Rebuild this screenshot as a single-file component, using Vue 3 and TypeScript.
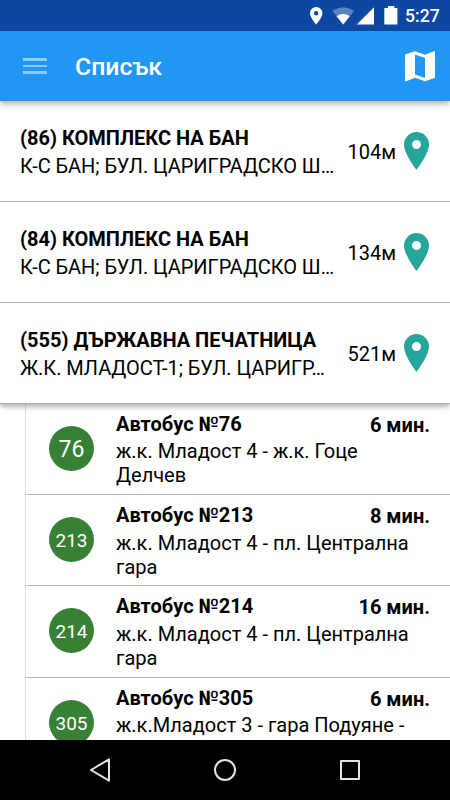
<script setup lang="ts">
interface Stop {
  name: string
  address: string
  distance: string
}

interface Trip {
  line: string
  route: string[]
  eta: string
}

const stops: Stop[] = [
  { name: '(86) КОМПЛЕКС НА БАН', address: 'К-С БАН; БУЛ. ЦАРИГРАДСКО Ш…', distance: '104м' },
  { name: '(84) КОМПЛЕКС НА БАН', address: 'К-С БАН; БУЛ. ЦАРИГРАДСКО Ш…', distance: '134м' },
  { name: '(555) ДЪРЖАВНА ПЕЧАТНИЦА', address: 'Ж.К. МЛАДОСТ-1; БУЛ. ЦАРИГР…', distance: '521м' },
]

const trips: Trip[] = [
  { line: '76', route: ['ж.к. Младост 4 - ж.к. Гоце', 'Делчев'], eta: '6 мин.' },
  { line: '213', route: ['ж.к. Младост 4 - пл. Централна', 'гара'], eta: '8 мин.' },
  { line: '214', route: ['ж.к. Младост 4 - пл. Централна', 'гара'], eta: '16 мин.' },
  { line: '305', route: ['ж.к.Младост 3 - гара Подуяне -'], eta: '6 мин.' },
]
</script>

<template>
  <div class="screen">
    <div class="status">
      <svg class="status-icons" width="108" height="31" viewBox="0 0 108 31">
        <path
          fill="#fff"
          fill-rule="evenodd"
          d="M16.2 7a6.2 6.2 0 0 0-6.2 6.2c0 4.4 6.2 11.2 6.2 11.2s6.2-6.8 6.2-11.2A6.2 6.2 0 0 0 16.2 7zm0 4a2.2 2.2 0 1 1 0 4.4 2.2 2.2 0 0 1 0-4.4z"
        />
        <path fill="#5c83bf" d="M43.2 24.6L32.2 10.8Q43.2 3.6 54.2 10.8z" />
        <path fill="#fff" d="M43.2 24.6L36.6 16.2Q43.2 11.8 49.8 16.2z" />
        <path fill="#fff" d="M56.7 24.6L74 7.2v17.4z" />
        <path
          fill="#fff"
          d="M85.3 8h2.6V6.1h6.4V8h2.5q.6 0 .6.6v15.3q0 .7-.7.7H85q-.7 0-.7-.7V8.7q0-.7.7-.7z"
        />
      </svg>
      <span class="clock">5:27</span>
    </div>

    <header class="toolbar">
      <div class="menu"><i></i><i></i><i></i></div>
      <h1>Списък</h1>
      <svg class="map" width="30" height="31" viewBox="0 0 30 31">
        <path
          fill="#fff"
          fill-rule="evenodd"
          d="M29.2.1l-.3.1L20 3.7 10 .2.6 3.3Q0 3.5 0 4.2v25.3q0 .8.8.8l.3-.1 8.9-3.4 10 3.5 9.4-3.2q.6-.2.6-.9V.9q0-.8-.8-.8zM20 26.9l-10-3.5V3.6l10 3.5z"
        />
      </svg>
    </header>

    <section class="stops">
      <div v-for="stop in stops" :key="stop.name" class="stop">
        <div class="stop-text">
          <div class="name">{{ stop.name }}</div>
          <div class="address">{{ stop.address }}</div>
        </div>
        <span class="distance">{{ stop.distance }}</span>
        <svg class="pin" width="25" height="38" viewBox="0 0 25 38">
          <path
            fill="#26a69a"
            fill-rule="evenodd"
            d="M12.5 0A12.5 12.5 0 0 0 0 12.6C0 22 12.5 38 12.5 38S25 22 25 12.6A12.5 12.5 0 0 0 12.5 0zm0 8a4.5 4.5 0 1 1 0 9 4.5 4.5 0 0 1 0-9z"
          />
        </svg>
      </div>
    </section>

    <section class="trips">
      <div v-for="trip in trips" :key="trip.line" class="trip">
        <div class="badge" :class="{ big: trip.line.length < 3 }">{{ trip.line }}</div>
        <div class="trip-text">
          <div class="trip-head">
            <span>Автобус №{{ trip.line }}</span>
            <span class="eta">{{ trip.eta }}</span>
          </div>
          <div class="route">
            <div v-for="part in trip.route" :key="part">{{ part }}</div>
          </div>
        </div>
      </div>
    </section>

    <nav class="navbar">
      <svg width="450" height="60" viewBox="0 0 450 60" fill="none" stroke="#e4e4e4" stroke-width="2">
        <path stroke-linejoin="round" d="M91 30L109 19.3v21.4z" />
        <circle cx="225" cy="30" r="10" />
        <rect x="341" y="21" width="18" height="18" stroke-linejoin="round" />
      </svg>
    </nav>
  </div>
</template>

<style>
body {
  margin: 0;
}
</style>

<style scoped>
.screen {
  display: flex;
  flex-direction: column;
  width: 450px;
  height: 800px;
  overflow: hidden;
  background: #fff;
  color: #000;
  font-family: Roboto, 'Noto Sans', sans-serif;
  font-size: 20px;
  white-space: nowrap;
}

.status {
  flex: none;
  display: flex;
  justify-content: flex-end;
  align-items: center;
  height: 31px;
  padding-right: 10px;
  background: #0d47a1;
}

.status-icons {
  flex: none;
}

.clock {
  width: 35px;
  margin-left: -3px;
  padding-top: 2px;
  color: #fff;
  font-size: 17.6px;
  font-weight: 500;
  line-height: 29px;
}

.toolbar {
  position: relative;
  z-index: 2;
  flex: none;
  box-sizing: border-box;
  display: flex;
  align-items: center;
  height: 70px;
  padding: 0 15px 0 23px;
  background: #2196f3;
  box-shadow: 0 3px 6px rgba(0, 0, 0, 0.3);
}

.menu {
  display: flex;
  flex-direction: column;
  gap: 4px;
  width: 24px;
}

.menu i {
  height: 2.5px;
  background: #90caf9;
}

h1 {
  flex: 1;
  margin: 0 0 0 28px;
  padding-top: 2px;
  color: #fff;
  font-size: 24.8px;
  font-weight: 500;
  line-height: 30px;
}

.stops {
  position: relative;
  z-index: 1;
  flex: none;
  background: #fff;
  box-shadow: 0 3px 5px rgba(0, 0, 0, 0.28);
}

.stop {
  box-sizing: border-box;
  display: flex;
  height: 101px;
  padding: 24px 21px 0 20px;
  border-bottom: 1px solid #b0b0b0;
}

.stop-text {
  flex: 1;
  line-height: 27px;
}

.name {
  font-weight: 700;
}

.address {
  margin-top: 1px;
  letter-spacing: -0.05px;
}

.distance {
  margin: 14px 8px 0 0;
  line-height: 27px;
}

.pin {
  flex: none;
  margin-top: 7px;
}

.trips {
  flex: 1;
  min-height: 0;
  margin-left: 25px;
  border-left: 1px solid #ddd;
  overflow: hidden;
}

.trip {
  box-sizing: border-box;
  display: flex;
  height: 91.2px;
  padding: 7px 20px 0 23px;
  border-bottom: 1px solid #b8b8b8;
}

.badge {
  flex: none;
  width: 45px;
  height: 45px;
  margin: 15px 22px 0 0;
  border-radius: 50%;
  background: #388036;
  color: #fff;
  font-size: 19px;
  line-height: 47px;
  text-align: center;
}

.badge.big {
  font-size: 23px;
}

.trip-text {
  flex: 1;
}

.trip-head {
  display: flex;
  justify-content: space-between;
  font-weight: 700;
  line-height: 26px;
}

.eta {
  padding-top: 1px;
}

.route {
  margin-top: 1.4px;
  line-height: 24px;
}

.navbar {
  position: relative;
  z-index: 2;
  flex: none;
  height: 60px;
  background: #000;
}

.navbar svg {
  display: block;
}
</style>
